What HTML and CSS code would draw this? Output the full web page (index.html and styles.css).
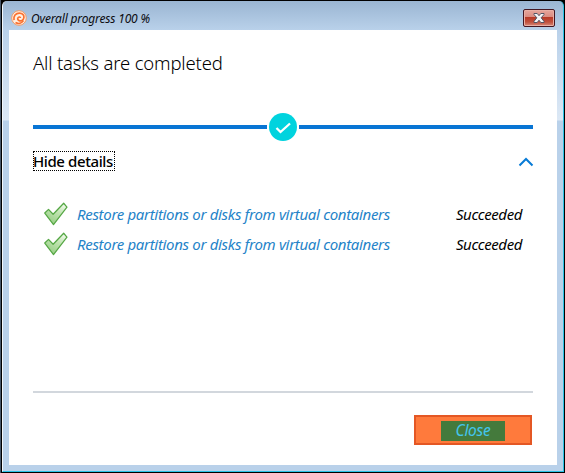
FILE: index.html
```html
<!DOCTYPE html>
<html lang="en">
<head>
<meta charset="utf-8">
<title>Overall progress</title>
<link rel="stylesheet" href="styles.css">
</head>
<body>
<div class="window">
  <header class="titlebar">
    <svg class="app-icon" width="16" height="16" viewBox="0 0 16 16">
      <circle cx="8" cy="8" r="7.3" fill="#fff0e2" stroke="#f19a66" stroke-width="1"/>
      <path d="M3 10.200C2.200 5.800 4.800 3.100 8.400 3.100c3 0 4.800 2 4.500 4.400-.3 2.400-2.300 3.700-4.300 3.300-1.900-.4-2.400-2.300-1.400-3.300.9-.9 2.300-.5 2.200.5" fill="none" stroke="#fb7130" stroke-width="1.700"/>
      <path d="M4.500 12.500c3 1.800 6.500.8 8-1.800" fill="none" stroke="#fb7130" stroke-width="1.500"/>
    </svg>
    <span class="caption">Overall progress 100 %</span>
    <button class="close-x" aria-label="Close window">
      <svg width="12" height="10" viewBox="0 0 12 10">
        <path d="M1 .5h3.200L6 2.700 7.800.5H11v1L8.200 4.800 11 8.400v1.100H7.800L6 7.200 4.200 9.500H1V8.400l2.800-3.600L1 1.500z" fill="#f5f5f7" stroke="#535666"/>
      </svg>
    </button>
  </header>
  <main class="content">
    <h1 class="heading">All tasks are completed</h1>
    <div class="progress">
      <span class="line"></span>
      <svg width="28" height="28" viewBox="0 0 28 28">
        <circle cx="14" cy="14" r="14" fill="#00d3de"/>
        <path d="M7.500 15l4 4L21 10.500" fill="none" stroke="#fff" stroke-width="2.300"/>
      </svg>
      <span class="line"></span>
    </div>
    <div class="details">
      <span class="toggle">Hide details</span>
      <svg class="chevron" width="16" height="10" viewBox="0 0 16 10"><path d="M1.500 8.500L8 2l6.500 6.500" fill="none" stroke="#087bd6" stroke-width="2"/></svg>
    </div>
    <ul class="tasks">
      <li class="task">
        <svg class="tick" width="24" height="24" viewBox="0 0 25 25">
          <defs><linearGradient id="leaf" x1="1" y1="0" x2=".4" y2="1"><stop offset="0" stop-color="#fbfff8"/><stop offset=".5" stop-color="#bfe3b0"/><stop offset="1" stop-color="#98cf86"/></linearGradient></defs>
          <path d="M.8 11.500l3.900-3.800 4.800 5.100L20.500 1.300l3.400 4.100-14 18.100z" fill="url(#leaf)" stroke="#55a744" stroke-width="1.300" stroke-linejoin="round"/>
        </svg>
        <span class="name">Restore partitions or disks from virtual containers</span>
        <span class="status">Succeeded</span>
      </li>
      <li class="task">
        <svg class="tick" width="24" height="24" viewBox="0 0 25 25">
          <path d="M.8 11.500l3.900-3.800 4.800 5.100L20.500 1.300l3.400 4.100-14 18.100z" fill="url(#leaf)" stroke="#55a744" stroke-width="1.300" stroke-linejoin="round"/>
        </svg>
        <span class="name">Restore partitions or disks from virtual containers</span>
        <span class="status">Succeeded</span>
      </li>
    </ul>
    <footer class="footer">
      <button class="close"><span class="close-label">Close</span></button>
    </footer>
  </main>
</div>
</body>
</html>
```

FILE: styles.css
```css
* { box-sizing: border-box; }
body {
  margin: 0;
  height: 473px;
  padding: 1px 1px 1px 2px;
  overflow: hidden;
  background: linear-gradient(90deg, #47576a 0, #47576a 1px, #000 1px);
  font-family: "Noto Sans", "Open Sans", sans-serif;
}
.window {
  height: 471px;
  padding: 0 6px 6px;
  border: solid #2bc2e5;
  border-width: 0 1px 1px;
  border-left-color: #f2f7fc;
  border-radius: 5px 5px 0 0;
  background: linear-gradient(#9ab5d2 0, #b9d1ea 29px, #dce8f5 119px, #b9d1ea 120px);
}
.titlebar {
  height: 29px;
  display: flex;
  align-items: flex-start;
  padding: 8px 2px 0 2px;
}
.app-icon { margin-top: 1px; }
.caption {
  margin-left: 4px;
  font-size: 12px;
  line-height: 19px;
  font-style: italic;
  white-space: nowrap;
  letter-spacing: -.17px;
  color: #0c0c10;
}
.close-x {
  margin-left: auto;
  width: 32px;
  height: 18px;
  padding: 0;
  display: grid;
  place-items: center;
  border: 1px solid #431722;
  border-radius: 2px;
  background: linear-gradient(#e7a69c 0, #d98c81 45%, #b93a27 46%, #c0503d 75%, #d98b7a 100%);
  box-shadow: inset 0 0 0 1px #e9afa5;
}
.content {
  height: 435px;
  padding: 20px 24px 0;
  background: #fff;
  display: flex;
  flex-direction: column;
}
.heading {
  margin: 0;
  height: 28px;
  font-size: 18.500px;
  line-height: 25px;
  font-weight: 300;
  letter-spacing: -.17px;
  white-space: nowrap;
  color: #000;
}
.progress {
  margin-top: 35px;
  height: 28px;
  display: flex;
  align-items: center;
  gap: 2px;
}
.progress svg { flex: none; }
.line { flex: 1; height: 4px; background: #0875d4; }
.details {
  margin-top: 10px;
  height: 20px;
  display: flex;
  align-items: center;
  justify-content: space-between;
}
.chevron { margin: 2px -1px 0 0; }
.toggle {
  width: 82px;
  height: 20px;
  border: 1px dotted #000;
  font-size: 15px;
  line-height: 18px;
  font-weight: 500;
  letter-spacing: -.4px;
  text-indent: -1px;
  white-space: nowrap;
  color: #000;
}
.tasks {
  margin: 28px 0 0;
  padding: 0 11px 0 11px;
  list-style: none;
}
.task {
  height: 30px;
  display: flex;
  align-items: center;
  font-size: 15px;
  font-style: italic;
  white-space: nowrap;
}
.tick { margin-top: -1px; flex: none; }
.name { margin-left: 9px; color: #2583c8; letter-spacing: -.32px; }
.status { margin-left: auto; color: #000; letter-spacing: -.4px; }
.footer {
  margin-top: 132px;
  padding: 22px 1px 0 0;
  border-top: 2px solid #d2d7dd;
  display: flex;
  justify-content: flex-end;
}
.close {
  width: 118px;
  height: 30px;
  padding: 0;
  display: grid;
  place-items: center;
  border: 2px solid #e45724;
  background: #ff7a3c;
}
.close-label {
  width: 64px;
  height: 20px;
  margin-top: 1px;
  background: #447a3c;
  color: #43c5ed;
  font: italic 15.500px/18px "Noto Sans", sans-serif;
  letter-spacing: -.3px;
}
```
